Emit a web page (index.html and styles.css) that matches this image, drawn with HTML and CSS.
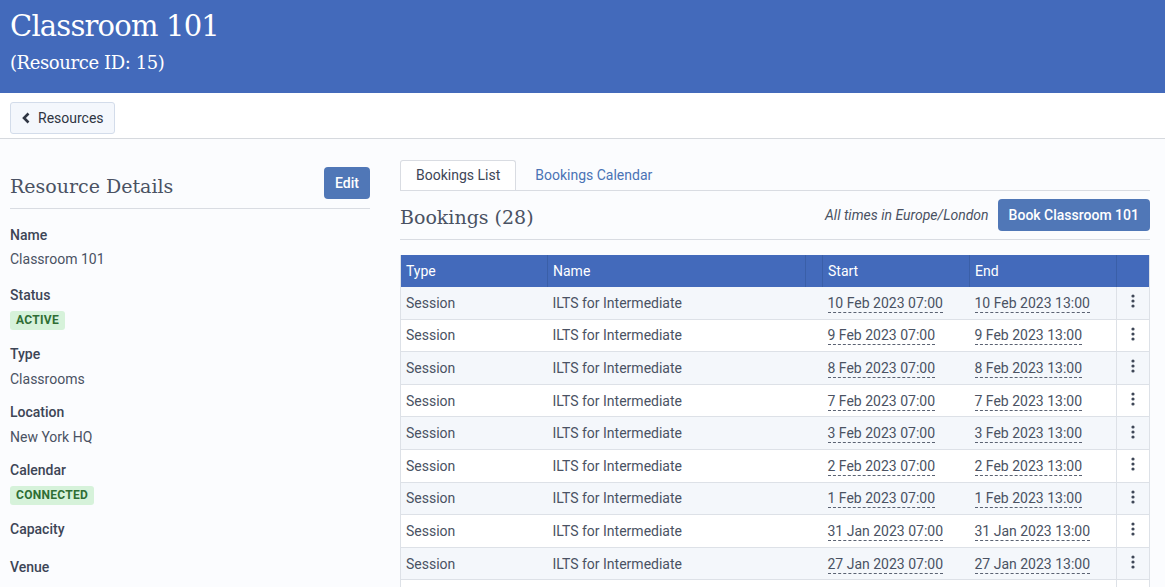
FILE: index.html
```html
<!DOCTYPE html>
<html lang="en">
  <head>
    <meta charset="UTF-8" />
    <title>Classroom 101</title>
    <link rel="stylesheet" href="styles.css">
  </head>
  <body>
    <!-- Page header -->
    <div class="page-header">
      <h1>Classroom 101</h1>
      <h2>(Resource ID: 15)</h2>
    </div>

    <div class="toolbar">
      <button class="back-button">
        <svg width="10" height="12" viewBox="0 0 10 12"><path d="M7.5 1.5 L3 6 L7.5 10.5" fill="none" stroke="#2f3542" stroke-width="2.6"/></svg>
        Resources
      </button>
    </div>

    <div class="content">
      <!-- Resource details -->
      <div class="details">
        <div class="section-head">
          <h3>Resource Details</h3>
          <button class="btn">Edit</button>
        </div>
        <dl class="fields">
          <dt>Name</dt>
          <dd class="first">Classroom 101</dd>
          <dt>Status</dt>
          <dd class="badge-row"><span class="badge">ACTIVE</span></dd>
          <dt>Type</dt>
          <dd>Classrooms</dd>
          <dt>Location</dt>
          <dd>New York HQ</dd>
          <dt>Calendar</dt>
          <dd class="badge-row"><span class="badge">CONNECTED</span></dd>
          <dt>Capacity</dt>
          <dd class="empty"></dd>
          <dt>Venue</dt>
          <dd class="empty"></dd>
        </dl>
      </div>

      <!-- Bookings -->
      <div class="bookings">
        <div class="tabs">
          <div class="tab active">Bookings List</div>
          <div class="tab">Bookings Calendar</div>
        </div>
        <div class="bookings-head">
          <h3>Bookings (28)</h3>
          <div class="head-right">
            <span class="tz">All times in Europe/London</span>
            <button class="btn">Book Classroom 101</button>
          </div>
        </div>
        <table class="bookings-table">
          <thead>
            <tr>
              <th class="col-type">Type</th>
              <th class="col-name">Name</th>
              <th class="col-gap"></th>
              <th class="col-start">Start</th>
              <th class="col-end">End</th>
              <th class="col-menu"></th>
            </tr>
          </thead>
          <tbody id="rows"></tbody>
        </table>
      </div>
    </div>

    <script>
      const days = ["10 Feb", "9 Feb", "8 Feb", "7 Feb", "3 Feb", "2 Feb", "1 Feb", "31 Jan", "27 Jan", "26 Jan"];
      const rows = document.getElementById("rows");
      const kebab =
        '<svg width="4" height="14" viewBox="0 0 4 14"><circle cx="2" cy="2" r="1.6"/><circle cx="2" cy="7" r="1.6"/><circle cx="2" cy="12" r="1.6"/></svg>';

      days.forEach((day) => {
        const tr = document.createElement("tr");
        tr.innerHTML =
          "<td>Session</td>" +
          "<td>ILTS for Intermediate</td>" +
          "<td></td>" +
          '<td><span class="date">' + day + " 2023 07:00</span></td>" +
          '<td><span class="date">' + day + " 2023 13:00</span></td>" +
          '<td class="menu">' + kebab + "</td>";
        rows.appendChild(tr);
      });
    </script>
  </body>
</html>
```

FILE: styles.css
```css
body {
  margin: 0;
  font-family: Roboto, "Liberation Sans", sans-serif;
  font-size: 14px;
  color: #4a5263;
  background-color: #fbfcfe;
}
h1,
h2,
h3 {
  margin: 0;
  font-family: "DejaVu Serif", "Liberation Serif", serif;
  font-weight: normal;
}
.page-header {
  background-color: #436abb;
  color: white;
  height: 93px;
  padding: 8px 10px 0;
  box-sizing: border-box;
}
.page-header h1 {
  font-size: 29px;
  line-height: 36px;
  letter-spacing: -0.8px;
}
.page-header h2 {
  font-size: 18px;
  line-height: 24px;
  margin-top: 7px;
  letter-spacing: -0.4px;
}
.toolbar {
  background-color: white;
  height: 46px;
  padding: 9px 10px 0;
  box-sizing: border-box;
  border-bottom: 1px solid #d6d9de;
}
.back-button {
  display: flex;
  align-items: center;
  gap: 7px;
  height: 32px;
  padding: 0 10px 0 10px;
  background-color: #f4f7fc;
  border: 1px solid #d3dcea;
  border-radius: 3px;
  font-family: Roboto, sans-serif;
  font-size: 14px;
  color: #2f3542;
}
.content {
  display: flex;
  gap: 30px;
  padding: 21px 15px 0 10px;
}
.details {
  width: 360px;
  flex-shrink: 0;
}
.section-head {
  display: flex;
  justify-content: space-between;
  align-items: flex-start;
  padding-top: 7px;
  border-bottom: 1px solid #d9dce2;
  height: 49px;
  box-sizing: border-box;
}
.section-head h3 {
  font-size: 19px;
  margin-top: 8px;
  color: #4a5263;
}
.btn {
  background-color: #5077b7;
  color: white;
  border: none;
  border-radius: 4px;
  font-family: Roboto, sans-serif;
  font-size: 14px;
  font-weight: 500;
  height: 32px;
  padding: 0 11px;
}
.fields {
  margin: 17px 0 0;
}
.fields dt {
  font-weight: 500;
  color: #3d4556;
  line-height: 18px;
}
.fields dd {
  margin: 7px 0 0;
  line-height: 18px;
  min-height: 18px;
  padding-bottom: 15px;
}
.fields dd.first {
  margin-top: 6px;
  padding-bottom: 18px;
}
.fields dd.badge-row {
  height: 19px;
  min-height: 0;
  padding-bottom: 15px;
}
.fields dd.empty {
  min-height: 0;
  height: 0;
  padding-bottom: 13px;
}
.badge {
  display: inline-block;
  vertical-align: top;
  background-color: #d6f2da;
  color: #2f6e34;
  font-size: 12px;
  font-weight: bold;
  letter-spacing: 0.3px;
  line-height: 19px;
  padding: 0 6px;
  border-radius: 3px;
}
.bookings {
  flex-grow: 1;
}
.tabs {
  display: flex;
  height: 30px;
  border-bottom: 1px solid #d9dce2;
}
.tab {
  padding: 0 19px;
  line-height: 30px;
  color: #4a73b5;
}
.tab.active {
  padding: 0 15px;
  color: #3d4556;
  background-color: white;
  border: 1px solid #d9dce2;
  border-bottom: none;
  border-radius: 3px 3px 0 0;
  height: 30px;
  box-sizing: border-box;
  line-height: 29px;
}
.bookings-head {
  display: flex;
  justify-content: space-between;
  align-items: center;
  height: 48px;
  border-bottom: 1px solid #d9dce2;
}
.bookings-head h3 {
  font-size: 19px;
  color: #4a5263;
  margin-top: 3px;
}
.head-right {
  display: flex;
  align-items: center;
  gap: 9px;
}
.tz {
  font-style: italic;
  color: #4a5263;
}
.bookings-table {
  width: 100%;
  margin-top: 15px;
  border-collapse: collapse;
  border-left: 1px solid #dde1e7;
  border-right: 1px solid #dde1e7;
}
.bookings-table th {
  background-color: #436abb;
  color: white;
  font-weight: normal;
  text-align: left;
  height: 32px;
  padding: 0 5px;
  border-left: 1px solid #3a5fa8;
}
.bookings-table th:first-child {
  border-left: none;
}
.col-type { width: 136px; }
.col-name { width: 247px; }
.col-gap { width: 6px; }
.col-start { width: 136px; }
.col-end { width: 136px; }
.bookings-table td {
  height: 31.6px;
  padding: 0 5px;
  border-bottom: 1px solid #dde1e7;
}
.bookings-table tbody tr:nth-child(odd) {
  background-color: #f4f7fb;
}
.bookings-table tbody tr:nth-child(even) {
  background-color: white;
}
.date {
  border-bottom: 1px dashed #5a6272;
  padding-bottom: 1px;
}
.bookings-table td.menu {
  text-align: center;
  border-left: 1px solid #dde1e7;
  fill: #3f4757;
}
```
